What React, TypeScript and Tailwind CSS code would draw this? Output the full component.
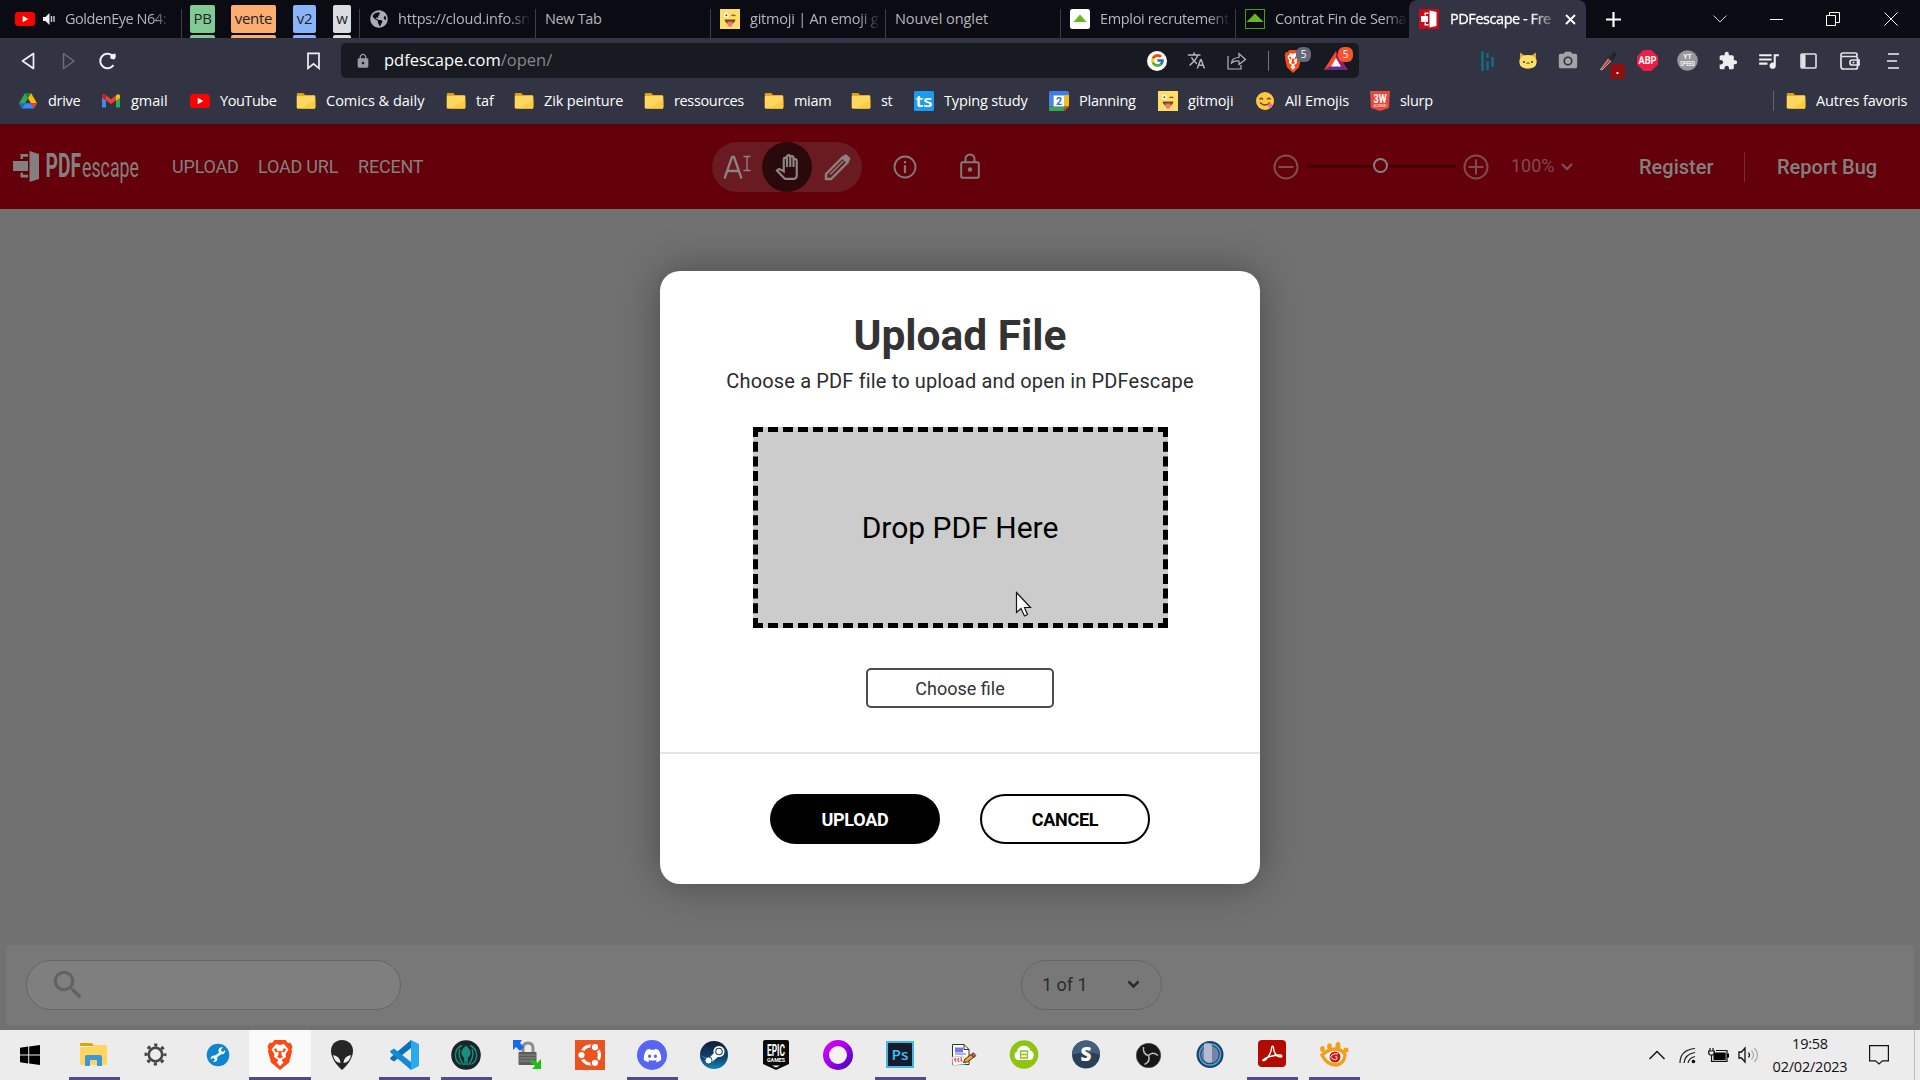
import React from "react";
import { FaDiscord, FaGlobeAmericas } from "react-icons/fa";
import { FcGoogle } from "react-icons/fc";
import {
  MdTranslate,
  MdQueueMusic,
  MdExtension,
  MdOutlinePanTool,
  MdSearch,
  MdPhotoCamera,
  MdLock,
} from "react-icons/md";
import { SiBrave } from "react-icons/si";

const sans = "font-['Open_Sans','Noto_Sans',sans-serif]";

function YouTube() {
  return (
    <svg width="20" height="20" viewBox="0 0 20 20">
      <rect y="3" width="20" height="14" rx="3.2" fill="#f00" />
      <path d="M7.7 6.8v6.4l5.6-3.2z" fill="#fff" />
    </svg>
  );
}

function Wink() {
  return (
    <svg width="20" height="20" viewBox="0 0 20 20">
      <rect width="20" height="20" fill="#ffdd67" />
      <circle cx="6.2" cy="6" r="2.400" fill="#fff" />
      <circle cx="6.400" cy="6.200" r="1" fill="#664e27" />
      <path d="M11.500 7q1.800-2 3.800 0" stroke="#664e27" strokeWidth="1.200" fill="none" />
      <path d="M4.500 10.500h11q-1 4.500-5.500 4.500T4.500 10.500z" fill="#664e27" />
      <path d="M7.500 12.500h5v2.500a2.500 2.800 0 0 1-5 0z" fill="#ff717f" />
    </svg>
  );
}

function Folder() {
  return (
    <svg width="20" height="20" viewBox="0 0 20 20">
      <path d="M.8 3q0-1 1-1h5.500l1.800 2h9q1 0 1 1v11.500q0 1-1 1H1.800q-1 0-1-1z" fill="#d99f17" />
      <path d="M.8 5.800q0-1 1-1h16.500q1 0 1 1v10.700q0 1-1 1H1.800q-1 0-1-1z" fill="#ffd75e" />
      <path d="M19.300 9v7.500q0 1-1 1H5z" fill="#fbcb43" />
    </svg>
  );
}

function Drive() {
  return (
    <svg width="20" height="20" viewBox="0 0 20 20">
      <path d="M7 2h6l-3 5.200z" fill="#188038" />
      <path d="M7 2l3 5.200L4 17.500 1 12.300z" fill="#34a853" />
      <path d="M13 2l6 10.300h-6L10 7.200z" fill="#fbbc04" />
      <path d="M7 12.300h6l3 5.200H4z" fill="#4285f4" />
      <path d="M13 12.300h6l-3 5.200z" fill="#ea4335" />
      <path d="M7 12.300H1l3 5.200z" fill="#1967d2" />
    </svg>
  );
}

function Gmail() {
  return (
    <svg width="20" height="20" viewBox="0 0 20 20">
      <path d="M1 5v11.500h4V8z" fill="#4285f4" />
      <path d="M19 5v11.500h-4V8z" fill="#34a853" />
      <path d="M1 4.500Q2 2.500 4.500 4L10 8.300 15 4.200v5L10 13 5 9.300 1 6.500z" fill="#ea4335" />
      <path d="M15 4.200q3-2 4 .5v2L15 9.600z" fill="#fbbc04" />
      <path d="M1 4.500v2L5 9.600V4.200q-3-1.700-4 .3z" fill="#c5221f" />
    </svg>
  );
}

function Yum() {
  return (
    <svg width="20" height="20" viewBox="0 0 20 20">
      <circle cx="10" cy="10" r="9" fill="#ffc83d" />
      <path d="M4.500 8.500q1.500-2.500 3.500 0M12 8.500q1.500-2.500 3.500 0M5 11.500q5 5 10 0" stroke="#6b4416" strokeWidth="1.300" fill="none" />
      <circle cx="15" cy="14.500" r="2.300" fill="#f56aa0" />
    </svg>
  );
}

function Calendar() {
  return (
    <svg width="20" height="20" viewBox="0 0 20 20">
      <path d="M0 1.500Q0 0 1.500 0h17Q20 0 20 1.500V5H0z" fill="#3f7de8" />
      <path d="M0 4h4.500v11.500H0z" fill="#4285f4" />
      <path d="M15.500 4H20v11.500h-4.500z" fill="#fbbc04" />
      <path d="M0 15.500h15.500V20h-14Q0 20 0 18.500z" fill="#34a853" />
      <path d="M15.500 15.500H20L15.500 20z" fill="#ea4335" />
      <path d="M4.500 4.500h11v11h-11z" fill="#fff" />
      <text x="10" y="14" textAnchor="middle" fontSize="10.500" fontWeight="700" fontFamily="Roboto, sans-serif" fill="#2f6fdc">2</text>
    </svg>
  );
}

function Typing() {
  return (
    <svg width="20" height="20" viewBox="0 0 20 20">
      <rect width="20" height="20" rx="1.500" fill="#1d9bf0" />
      <text x="10" y="15.500" textAnchor="middle" fontSize="16" fontWeight="600" textLength="17" lengthAdjust="spacingAndGlyphs" fontFamily="Noto Sans, sans-serif" fill="#fff">ts</text>
    </svg>
  );
}

function Academy() {
  return (
    <svg width="20" height="20" viewBox="0 0 20 20">
      <path d="M0 0h20l-1 17-9 3-9-3z" fill="#e9483b" />
      <text x="10" y="11.500" textAnchor="middle" fontSize="12" fontWeight="700" textLength="13" lengthAdjust="spacingAndGlyphs" fontFamily="Roboto, sans-serif" fill="#fff">3W</text>
      <text x="10" y="16" textAnchor="middle" fontSize="4" fontWeight="700" textLength="13" lengthAdjust="spacingAndGlyphs" fontFamily="Roboto, sans-serif" fill="#fbd0cc">ACADEMY</text>
    </svg>
  );
}

function GreenHouse({ dark = false }: { dark?: boolean }) {
  return (
    <svg width="20" height="20" viewBox="0 0 20 20">
      {dark ? (
        <rect x=".5" y=".5" width="19" height="19" fill="#0b0b14" stroke="#4c9a1c" />
      ) : (
        <rect width="20" height="20" rx="2.500" fill="#fff" />
      )}
      <path d={dark ? "M1.500 13L10 4.500 18.500 13z" : "M3.500 13L10 5.500 16.500 13z"} fill="#66b721" />
    </svg>
  );
}

function Door() {
  return (
    <svg width="20" height="20" viewBox="0 0 20 20">
      <rect width="20" height="20" fill="#cf0a18" />
      <path d="M10.500 1.500L17.500 3v14l-7 1.500zM2 7h7v6H2zM5.500 3.500h4v1.500H7v1.500H5.500zM5.500 16.500h4V15H7v-1.500H5.500z" fill="#fff" />
    </svg>
  );
}

function Sep() {
  return <div className="mt-[9px] h-[29px] w-px shrink-0 bg-[#3e3e46]" />;
}

const fade = "[mask-image:linear-gradient(to_right,black_82%,transparent_99%)]";

function Tab({ width, icon, label, textClass }: { width: string; icon?: React.ReactNode; label: string; textClass: string }) {
  return (
    <div className={`flex h-[38px] shrink-0 items-center gap-[10px] pl-[9px] ${width}`}>
      {icon}
      <span className={`whitespace-nowrap text-[14.500px] text-[#b5b5b9] ${textClass}`}>{label}</span>
    </div>
  );
}

function Group({ slot, chip, bar, label }: { slot: string; chip: string; bar: string; label: string }) {
  return (
    <div className={`h-[38px] shrink-0 pt-[5px] ${slot}`}>
      <div className={`flex flex-col gap-[2.500px] ${bar}`}>
        <div className={`flex h-[27.500px] items-center justify-center rounded-[2px] pb-[2px] text-[15px] tracking-[-0.300px] text-[#23232b] ${chip}`}>{label}</div>
        <div className={`h-[3px] rounded-t-[2px] ${chip}`} />
      </div>
    </div>
  );
}

function TabStrip() {
  return (
    <div className="flex h-[38px] bg-[#0b0b14]">
      <div className="flex w-[181px] shrink-0 items-center pl-[15px]">
        <YouTube />
        <svg className="ml-[8px]" width="14" height="12" viewBox="0 0 14 12">
          <path d="M0 4h2.500l4-4v12l-4-4H0z" fill="#f0f0f3" />
          <path d="M8.500 3v6M11 3v6" stroke="#c8c8cc" strokeWidth="1.400" />
        </svg>
        <span className={`ml-[8px] w-[107px] whitespace-nowrap text-[14.500px] tracking-[-0.450px] text-[#b5b5b9] ${fade}`}>GoldenEye N64:</span>
      </div>
      <Sep />
      <Group slot="w-[49px] pl-[8px]" bar="w-[25px]" chip="bg-[#81c995]" label="PB" />
      <Group slot="w-[62px]" bar="w-[45px]" chip="bg-[#fcad70]" label="vente" />
      <Group slot="w-[40px]" bar="w-[23px]" chip="bg-[#8ab4f8]" label="v2" />
      <Group slot="w-[26px]" bar="w-[18px]" chip="bg-[#dadce0]" label="w" />
      <Sep />
      <Tab width="w-[175px]" icon={<FaGlobeAmericas className="ml-px size-[18px] shrink-0 text-[#a9adb8]" />} label="https://cloud.info.sn" textClass={`w-[134px] tracking-[-0.200px] ${fade}`} />
      <Sep />
      <Tab width="w-[174px]" label="New Tab" textClass="tracking-[-0.350px]" />
      <Sep />
      <Tab width="w-[174px]" icon={<div className="shrink-0"><Wink /></div>} label="gitmoji | An emoji g" textClass={`w-[132px] tracking-[-0.220px] ${fade}`} />
      <Sep />
      <Tab width="w-[174px]" label="Nouvel onglet" textClass="tracking-[-0.050px]" />
      <Sep />
      <Tab width="w-[174px]" icon={<div className="shrink-0"><GreenHouse /></div>} label="Emploi recrutement" textClass={`w-[132px] tracking-[-0.330px] ${fade}`} />
      <Sep />
      <Tab width="w-[173px]" icon={<div className="shrink-0"><GreenHouse dark /></div>} label="Contrat Fin de Sema" textClass={`w-[134px] tracking-[-0.300px] ${fade}`} />
      <div className="flex w-[177px] shrink-0 items-center rounded-t-[8px] bg-[#323443] pl-[10px]">
        <Door />
        <span className="ml-[11px] w-[107px] whitespace-nowrap text-[14.500px] tracking-[-0.450px] text-white [mask-image:linear-gradient(to_right,black_75%,transparent_102%)] [-webkit-text-stroke:0.300px_white]">PDFescape - Fre</span>
        <svg className="ml-[8px]" width="11" height="11" viewBox="0 0 11 11"><path d="M1 1l9 9M10 1l-9 9" stroke="#fff" strokeWidth="1.900" /></svg>
      </div>
      <svg className="mt-[12px] ml-[20px]" width="15" height="15" viewBox="0 0 15 15"><path d="M7.500 0v15M0 7.500h15" stroke="#fff" strokeWidth="2.200" /></svg>
      <div className="ml-auto flex w-[229px] items-center">
        <div className="w-[58px] pl-[22px]"><svg width="14" height="8" viewBox="0 0 14 8"><path d="M.5.500L7 7 13.500.500" stroke="#d4d4d8" fill="none" /></svg></div>
        <div className="w-[57px] pl-[21px]"><div className="h-px w-[13px] bg-white" /></div>
        <div className="w-[56px] pl-[20px]"><svg width="14" height="14" viewBox="0 0 14 14"><path d="M.5 3.500h9v10h-9zM3.500 3V.500h10v10H10" stroke="#fff" fill="none" /></svg></div>
        <div className="pl-[22px]"><svg width="14" height="14" viewBox="0 0 14 14"><path d="M.5.500l13 13M13.500.500l-13 13" stroke="#fff" fill="none" /></svg></div>
      </div>
    </div>
  );
}

function Ext({ w = "w-[40px]", children }: { w?: string; children: React.ReactNode }) {
  return <div className={`relative flex h-[30px] shrink-0 items-center justify-center ${w}`}>{children}</div>;
}

function Toolbar() {
  return (
    <div className="flex h-[45px] items-center bg-[#323443]">
      <div className="flex w-[341px] shrink-0 items-center">
        <svg className="ml-[21px]" width="14" height="18" viewBox="0 0 14 18"><path d="M12.500 1.500v15L1.500 9z" stroke="#f2f2f4" strokeWidth="1.700" strokeLinejoin="round" fill="none" /></svg>
        <svg className="ml-[27px]" width="14" height="18" viewBox="0 0 14 18"><path d="M1.500 1.500v15L12 9z" stroke="#6b6d79" strokeWidth="1.500" strokeLinejoin="round" fill="none" /></svg>
        <svg className="ml-[22px]" width="19" height="18" viewBox="0 0 19 18"><path d="M15.500 13.200A7.300 7.300 0 1 1 14 3.200" stroke="#f2f2f4" strokeWidth="2" fill="none" /><path d="M12 2.500l5.500-1q1 3.500-1 6l-4-.8z" fill="#f2f2f4" /></svg>
        <svg className="ml-[189px]" width="15" height="18" viewBox="0 0 15 18"><path d="M2 1.300h11v15l-5.500-4.500L2 16.300z" stroke="#f2f2f4" strokeWidth="1.700" fill="none" /></svg>
      </div>
      <div className="flex h-[35px] w-[1018px] shrink-0 items-center rounded-[5px] bg-[#181a21]">
        <MdLock className="ml-[14px] size-[16px] shrink-0 text-[#9a9ba1]" />
        <span className="ml-[13px] w-[765px] text-[16.500px] text-white">pdfescape.com<span className="text-[#85868c]">/open/</span></span>
        <div className="-ml-[2px] flex size-[20px] items-center justify-center rounded-full bg-white"><FcGoogle className="size-[15px]" /></div>
        <MdTranslate className="ml-[20px] size-[19px] text-[#b5b6ba]" />
        <svg className="ml-[21px]" width="20" height="18" viewBox="0 0 20 18"><path d="M1 4v13h13v-4M4.500 11Q5 5.500 12 5.500V1.500l6.500 6L12 12.500V9Q7 8.500 4.500 11z" stroke="#b5b6ba" strokeWidth="1.200" fill="none" /></svg>
        <div className="ml-[21px] h-[20px] w-px bg-[#72737a]" />
        <div className="relative ml-[14px] h-[24px] w-[28px]">
          <svg className="mt-[1px]" width="20" height="23" viewBox="0 0 30 30" preserveAspectRatio="none"><BraveShape /></svg>
          <div className="absolute -top-[2px] left-[13px] flex h-[15px] w-[15px] items-center justify-center rounded-[6px] bg-[#656878] text-[10px] text-white">5</div>
        </div>
        <div className="relative ml-[13px] h-[24px] w-[30px]">
          <svg width="24" height="22" viewBox="0 0 24 22"><path d="M12 2L0 21h24z" fill="#9e1f63" /><path d="M12 2L0 21l12-6z" fill="#ff4724" /><path d="M0 21h24l-12-7z" fill="#662d91" /><path d="M12 9l-5 8.500h10z" fill="#fff" /></svg>
          <div className="absolute -top-[2px] left-[14px] flex h-[15px] w-[15px] items-center justify-center rounded-[6px] bg-[#fb542b] text-[10px] text-white">5</div>
        </div>
      </div>
      <div className="flex w-[561px] pl-[109px]">
        <Ext>
          <svg width="14" height="22" viewBox="0 0 14 22"><path d="M1.500 1v20M6.500 3v5M6.500 11v9M11.500 7v10" stroke="#146a80" strokeWidth="2.600" /></svg>
        </Ext>
        <Ext>
          <svg width="18" height="17" viewBox="0 0 18 17"><path d="M1 .5l4.500 3h7l4.500-3v5.500q1.500 4-.5 7-2 3.500-7.500 3.500T1.500 13q-2-3-.5-7z" fill="#e8a33a" /><path d="M9 3q8 0 8.500 7 0 6.500-8.500 6.500T.5 10Q1 3 9 3z" fill="#ffdf6b" /><circle cx="5" cy="10" r="1" fill="#4a3b12" /><circle cx="13" cy="10" r="1" fill="#4a3b12" /><path d="M7.500 11.500l1.500-.8 1.500.8" stroke="#4a3b12" fill="none" /></svg>
        </Ext>
        <Ext><MdPhotoCamera className="size-[22px] text-[#a3a3a6]" /></Ext>
        <Ext w="w-[40px]">
          <svg width="18" height="20" viewBox="0 0 18 20"><path d="M1.500 18.500L10 7l2.500 2.500L3 19z" fill="#d9392f" stroke="#ccc" strokeWidth=".8" /><path d="M9 6l5 4M11 7l4-5.500 2 1.500-4 6z" stroke="#25262b" strokeWidth="1.800" fill="#25262b" /></svg>
          <div className="absolute left-[22px] top-[18px] flex size-[15px] items-center justify-center rounded-[2px] bg-[#8f0f0f] pb-[2px] text-[12px] font-bold text-white">.</div>
        </Ext>
        <Ext w="w-[38px]">
          <svg width="21" height="21" viewBox="0 0 21 21"><path d="M6.500 0h8L21 6.500v8L14.500 21h-8L0 14.500v-8z" fill="#ed1e45" /><text x="10.500" y="14" textAnchor="middle" fontSize="10" fontWeight="700" textLength="18" lengthAdjust="spacingAndGlyphs" fontFamily="Roboto, sans-serif" fill="#fff">ABP</text></svg>
        </Ext>
        <Ext w="w-[42px]">
          <svg width="21" height="21" viewBox="0 0 21 21"><circle cx="10.500" cy="10.500" r="10.300" fill="#98989b" /><text x="10.500" y="9" textAnchor="middle" fontSize="7" fontWeight="700" fontFamily="Roboto, sans-serif" fill="#f4f4f4">YT</text><text x="10.500" y="16" textAnchor="middle" fontSize="6.500" fontWeight="700" textLength="15" lengthAdjust="spacingAndGlyphs" fontFamily="Roboto, sans-serif" fill="#f4f4f4">SPEED</text></svg>
        </Ext>
        <Ext><MdExtension className="size-[20px] text-[#eeeef0]" /></Ext>
        <Ext><MdQueueMusic className="size-[25px] text-[#eeeef0]" /></Ext>
        <Ext>
          <svg width="17" height="16" viewBox="0 0 17 16"><rect x="1" y="1" width="15" height="14" rx="1" stroke="#e4e4e8" strokeWidth="1.600" fill="none" /><path d="M1.500 1.500h4v13h-4z" fill="#e4e4e8" /></svg>
        </Ext>
        <Ext w="w-[43px]">
          <svg width="20" height="18" viewBox="0 0 20 18"><path d="M17 4V2.500Q17 1 15.500 1H3Q1 1 1 3v11.500Q1 17 3.500 17h12q2 0 2-2V6.500q0-2-2-2H2M19 8h-7q-2 0-2 2v1q0 2 2 2h7z" stroke="#e4e4e8" strokeWidth="1.700" fill="none" /><circle cx="13.500" cy="10.500" r="1" fill="#e4e4e8" /></svg>
        </Ext>
        <Ext w="w-[43px]">
          <svg width="12" height="16" viewBox="0 0 12 16"><path d="M1 1h11M0 8h10M1 15h11" stroke="#f0f0f2" strokeWidth="1.600" /></svg>
        </Ext>
      </div>
    </div>
  );
}

function BraveShape() {
  return (
    <g>
      <path d="M9.500 0h11l2.500 3 2.500-.3 2 4-1 3 .5 2-3 11L15 30 6 22.500l-3-11 .5-2-1-3 2-3.800L7 3z" fill="#fb4a16" />
      <path d="M15 5l4-1 4.500 5.500-3 4.500.5 3-4.500 3 2 2.500L15 26l-3.500-3.500 2-2.500L9 17l.5-3-3-4.500L11 4z" fill="#fff" />
      <path d="M11 8l-2 1.500 2 3 2-.5zM19 8l2 1.500-2 3-2-.5zM13.500 11v4L12 17l3 1.500 3-1.500-1.500-2v-4" fill="#fb4a16" />
    </g>
  );
}

function Bookmark({ w, icon, label, t = "tracking-[-0.300px]" }: { w: string; icon: React.ReactNode; label: string; t?: string }) {
  return (
    <div className={`flex shrink-0 items-center gap-[10px] ${w}`}>
      <div className="shrink-0">{icon}</div>
      <span className={`whitespace-nowrap text-[14.500px] text-white ${t}`}>{label}</span>
    </div>
  );
}

function Bookmarks() {
  return (
    <div className="flex h-[41px] items-center bg-[#323443] pb-[5px] pl-[18px]">
      <Bookmark w="w-[83px]" icon={<Drive />} label="drive" t="tracking-[-0.300px]" />
      <Bookmark w="w-[89px]" icon={<Gmail />} label="gmail" t="tracking-[0px]" />
      <Bookmark w="w-[106px]" icon={<YouTube />} label="YouTube" t="tracking-[-0.450px]" />
      <Bookmark w="w-[150px]" icon={<Folder />} label="Comics & daily" t="tracking-[0px]" />
      <Bookmark w="w-[68px]" icon={<Folder />} label="taf" t="tracking-[-0.100px]" />
      <Bookmark w="w-[130px]" icon={<Folder />} label="Zik peinture" t="tracking-[-0.150px]" />
      <Bookmark w="w-[120px]" icon={<Folder />} label="ressources" t="tracking-[-0.350px]" />
      <Bookmark w="w-[87px]" icon={<Folder />} label="miam" t="tracking-[-0.300px]" />
      <Bookmark w="w-[63px]" icon={<Folder />} label="st" />
      <Bookmark w="w-[135px]" icon={<Typing />} label="Typing study" t="tracking-[-0.150px]" />
      <Bookmark w="w-[109px]" icon={<Calendar />} label="Planning" t="tracking-[-0.250px]" />
      <Bookmark w="w-[97px]" icon={<Wink />} label="gitmoji" t="tracking-[-0.100px]" />
      <Bookmark w="w-[115px]" icon={<Yum />} label="All Emojis" t="tracking-[-0.050px]" />
      <Bookmark w="w-[80px]" icon={<Academy />} label="slurp" />
      <div className="ml-auto h-[20px] w-px bg-[#62646f]" />
      <Bookmark w="w-[146px] pl-[12px]" icon={<Folder />} label="Autres favoris" t="tracking-[-0.150px]" />
    </div>
  );
}

function AppHeader() {
  return (
    <header className="flex h-[85px] items-center border-t border-[#4a0710] bg-[#63000a] font-[Roboto,sans-serif] text-[#848080]">
      <svg className="ml-[13px] shrink-0" width="128" height="36" viewBox="0 0 128 36">
        <path d="M16.500 2L26 5v25l-9.500 3zM0 12h15v10H0zM7.500 5H15v2.800h-5V10H7.500zM7.500 28.500H15v-2.800h-5v-2H7.500z" fill="#848080" />
        <text x="32.500" y="28" fontSize="34" fontWeight="700" fontFamily="Roboto, sans-serif" textLength="35.500" lengthAdjust="spacingAndGlyphs" fill="#848080">PDF</text>
        <text x="69" y="28" fontSize="28" fontFamily="Roboto, sans-serif" textLength="57" lengthAdjust="spacingAndGlyphs" fill="#848080">escape</text>
      </svg>
      <nav className="-mt-[2px] flex w-[571px] shrink-0 text-[18px] tracking-[-0.200px]">
        <span className="box-content w-[86px] pl-[31px]">UPLOAD</span>
        <span className="w-[100px]">LOAD URL</span>
        <span>RECENT</span>
      </nav>
      <div className="flex h-[50px] w-[150px] shrink-0 items-center rounded-full bg-[#6a1a21]">
        <div className="flex w-[50px] justify-center">
          <svg width="28" height="26" viewBox="0 0 28 26"><path d="M1.500 24.500L9 3h2l7.500 21.500M4.500 17h11" stroke="#8d8181" strokeWidth="2.300" fill="none" /><path d="M20.500 2.500h7M24 2.500v14M20.500 16.500h7" stroke="#8d8181" strokeWidth="1.400" /></svg>
        </div>
        <div className="flex size-[50px] items-center justify-center rounded-full bg-[#2a090c]">
          <MdOutlinePanTool className="size-[26px] text-[#8d8585]" />
        </div>
        <div className="flex w-[50px] justify-center">
          <svg width="27" height="27" viewBox="0 0 27 27"><path d="M2 20L18.500 3.500l5 5L7 25H2z" stroke="#8d8181" strokeWidth="2.400" fill="none" /><path d="M18 3l3-2.500q1-.5 2 .3L26 4q.8 1 0 2l-2.500 3z" fill="#8d8181" /><path d="M6 20.500L19.500 7" stroke="#8d8181" strokeWidth="1.400" /></svg>
        </div>
      </div>
      <svg className="ml-[31px] shrink-0" width="24" height="24" viewBox="0 0 24 24"><circle cx="12" cy="12" r="10.500" stroke="#807a7a" strokeWidth="1.900" fill="none" /><path d="M12 10.300V18M12 6v2.300" stroke="#807a7a" strokeWidth="2.200" /></svg>
      <svg className="-mt-[2px] ml-[43px] shrink-0" width="20" height="26" viewBox="0 0 20 26"><rect x="1.200" y="9.200" width="17.600" height="15.500" rx="1.500" stroke="#807a7a" strokeWidth="2" fill="none" /><path d="M5.500 9V6a4.500 4.500 0 0 1 9 0v3" stroke="#807a7a" strokeWidth="2" fill="none" /><circle cx="10" cy="16.500" r="2.200" fill="#807a7a" /></svg>
      <div className="ml-auto flex items-center">
        <svg width="26" height="26" viewBox="0 0 26 26"><circle cx="13" cy="13" r="11.500" stroke="#804c52" strokeWidth="2" fill="none" /><path d="M5.500 13h15" stroke="#804c52" strokeWidth="2" /></svg>
        <div className="relative mx-[7px] h-[14px] w-[150px] pt-[5px]">
          <div className="h-[3px] bg-[#420208]" />
          <div className="absolute -top-[2px] left-[67px] size-[15px] rounded-full border-2 border-[#858080] bg-[#63000a]" />
        </div>
        <svg width="26" height="26" viewBox="0 0 26 26"><circle cx="13" cy="13" r="11.500" stroke="#804c52" strokeWidth="2" fill="none" /><path d="M5.500 13h15M13 5.500v15" stroke="#804c52" strokeWidth="2" /></svg>
        <span className="-mt-[3px] ml-[22px] w-[50px] text-[18px] text-[#804c52]">100%</span>
        <svg width="12" height="8" viewBox="0 0 12 8"><path d="M1 1l5 5 5-5" stroke="#804c52" strokeWidth="2.300" fill="none" /></svg>
        <span className="ml-[66px] w-[105px] text-[20px] font-medium">Register</span>
        <div className="h-[30px] w-px bg-[#762c35]" />
        <span className="ml-[32px] w-[143px] text-[20px] font-medium">Report Bug</span>
      </div>
    </header>
  );
}

function UploadDialog() {
  return (
    <div className="flex h-[613px] w-[600px] flex-col items-center rounded-[20px] bg-white pt-[38px] font-[Roboto,sans-serif] shadow-[0_0_40px_rgba(0,0,0,0.350)]">
      <h1 className="text-[42.500px] leading-[54px] font-bold text-[#333]">Upload File</h1>
      <p className="mt-[5px] text-[20px] leading-[26px] tracking-[0.150px] whitespace-nowrap text-[#2c2c2c]">Choose a PDF file to upload and open in PDFescape</p>
      <div className="relative mt-[33px] flex h-[201px] w-[415px] items-center justify-center border-[5px] border-dashed border-black bg-[#ccc] text-[30px] text-black">
        Drop PDF Here
        <svg className="absolute top-[159px] left-[257px]" width="18" height="26" viewBox="0 0 18 26"><path d="M1.500 1.500v20l4.500-4 3.500 7.500 3-1.500-3-7h6z" fill="#fff" stroke="#15151f" strokeWidth="1.200" /></svg>
      </div>
      <button className="mt-[40px] h-[40px] w-[188px] rounded-[5px] border-2 border-[#4c4c4c] text-[18px] text-[#333]">Choose file</button>
      <div className="mt-[44px] h-[2px] w-full bg-[#e5e5e5]" />
      <div className="mt-[40px] flex gap-[40px] text-[18px] font-bold tracking-[-0.250px]">
        <button className="h-[50px] w-[170px] rounded-full bg-black text-white">UPLOAD</button>
        <button className="h-[50px] w-[170px] rounded-full border-2 border-black text-black">CANCEL</button>
      </div>
    </div>
  );
}

function Task({ children, line = false, active = false }: { children: React.ReactNode; line?: boolean; active?: boolean }) {
  return (
    <div className={`flex h-[50px] w-[62px] shrink-0 flex-col items-center ${active ? "bg-[#fafafa]" : ""}`}>
      <div className="flex h-[47px] items-center pt-[3px]">{children}</div>
      {active ? <div className="h-[3px] w-full bg-[#534a8c]" /> : line ? <div className="h-[3px] w-[51px] bg-[#534a8c]" /> : null}
    </div>
  );
}

function TaskIcon({ children }: { children: React.ReactNode }) {
  return <svg width="30" height="30" viewBox="0 0 30 30">{children}</svg>;
}

function Taskbar() {
  return (
    <footer className="flex h-[50px] bg-[#ececec]">
      <div className="flex w-[63px] shrink-0 items-center pl-[20px]">
        <svg width="20" height="20" viewBox="0 0 20 20"><path d="M0 2.700l8.200-1.100v7.900H0zM9.200 1.400L20 0v9.500H9.200zM0 10.500h8.200v8L0 17.300zM9.200 10.500H20V20L9.200 18.600z" /></svg>
      </div>
      <Task line><TaskIcon><path d="M1 4q0-1 1-1h11l2 3H1z" fill="#dfa10c" /><path d="M1 7h12l2-2h12q1 0 1 1v18q0 1-1 1H1z" fill="#ffd55c" /><path d="M6 26V17q0-2 2-2h13q2 0 2 2v9h-5v-6h-7v6z" fill="#3a96dd" /></TaskIcon></Task>
      <Task><TaskIcon><circle cx="14.500" cy="14.500" r="6.700" stroke="#484848" strokeWidth="2.600" fill="none" /><circle cx="14.500" cy="14.500" r="9.400" stroke="#484848" strokeWidth="3.200" strokeDasharray="3.200 4.183" strokeDashoffset="1.600" fill="none" /></TaskIcon></Task>
      <Task><TaskIcon><circle cx="15" cy="15" r="11.300" fill="#0d86cf" /><path d="M11 18l8-6" stroke="#fff" strokeWidth="2.800" /><path d="M22.300 10l-2.800 2-1.800-2 2.300-2.800q-4.500-.5-4.700 4l2.500 2.800q4.500 1 4.500-4zM7.700 19.500l2.800-1.800 1.500 2-2 2.300q4 .5 4.500-3.500L12 15.500q-4.500-.5-4.300 4z" fill="#fff" /></TaskIcon></Task>
      <Task active><TaskIcon><BraveShape /></TaskIcon></Task>
      <Task><TaskIcon><path d="M15 0c7 0 11 5 11 11 0 7-6 15-11 19C10 26 4 18 4 11 4 5 8 0 15 0z" fill="#262626" /><path d="M6 15q7 1 7.500 8Q7 22 6 15zM24 15q-7 1-7.500 8Q23 22 24 15z" fill="#eee" /></TaskIcon></Task>
      <Task line><TaskIcon><path d="M22 0v8L5 21.500 1 19l1-2z" fill="#0b72b9" /><path d="M22 30v-8L5 8.500 1 11l1 2z" fill="#168ad0" /><path d="M22 0l8 4v22l-8 4z" fill="#29a9f2" /></TaskIcon></Task>
      <Task line><TaskIcon><circle cx="15" cy="15" r="14.800" fill="#1b2527" /><g stroke="#178f82" strokeWidth="1.400" fill="none"><path d="M11 5.500A10.500 10.500 0 0 0 10 24.500M19 5.500A10.500 10.500 0 0 1 20 24.500M9 9q-3 7 3.500 16M21 9q3 7-3.500 16M14 18v7M16 18v7" /></g><path d="M15 5.500c3 3 5 5 4.500 8.500-.5 2-2 3-3 4v3h-3v-3c-1-1-2.500-2-3-4C10 10.500 12 8.500 15 5.500z" fill="#178f82" /></TaskIcon></Task>
      <Task><TaskIcon><path d="M10 14V8q0-5 5-5t5 5v6" stroke="#8d8d8d" strokeWidth="3" fill="none" /><rect x="5.500" y="12" width="18" height="13" rx="1" fill="#5c5c5c" /><path d="M6 15h17M6 18h17M6 21h17" stroke="#8a8a8a" /><path d="M0 0h9L7 3l4 4-4 4-4-4-3 3z" fill="#1767f5" /><path d="M19 19l5 4 4-4v10h-9l3-3-5-4z" fill="#18c20e" /></TaskIcon></Task>
      <Task><TaskIcon><rect width="30" height="30" fill="#e95420" /><circle cx="15.500" cy="15" r="9" stroke="#fff" strokeWidth="3.200" fill="none" /><g fill="#fff" stroke="#e95420" strokeWidth="1.600"><circle cx="6.500" cy="15" r="3.900" /><circle cx="20" cy="7.200" r="3.900" /><circle cx="20" cy="22.800" r="3.900" /></g></TaskIcon></Task>
      <Task line><div className="flex size-[30px] items-center justify-center rounded-full bg-[#5865f2]"><FaDiscord className="size-[19px] text-white" /></div></Task>
      <Task><svg width="28" height="28" viewBox="0 0 28 28"><defs><linearGradient id="steam" x1="0" y1="0" x2="0" y2="1"><stop offset="0" stopColor="#171a37" /><stop offset=".6" stopColor="#0c4672" /><stop offset="1" stopColor="#1387b8" /></linearGradient></defs><circle cx="14" cy="14" r="14" fill="url(#steam)" /><path d="M0 14l8 4 6-6 5 3-7 6z" fill="#fff" /><circle cx="19" cy="10.500" r="4.700" stroke="#fff" strokeWidth="1.800" fill="#164468" /><circle cx="19" cy="10.500" r="2.700" fill="#fff" /><circle cx="8.500" cy="19.500" r="3.600" fill="#fff" stroke="#134b75" /></svg></Task>
      <Task><TaskIcon><path d="M2 2q0-2 2-2h22q2 0 2 2v22l-13 6-13-6z" fill="#0b0b0b" /><text x="15" y="15.500" textAnchor="middle" fontSize="16" fontWeight="700" textLength="18" lengthAdjust="spacingAndGlyphs" fontFamily="Roboto, sans-serif" fill="#fff">EPIC</text><text x="15" y="22" textAnchor="middle" fontSize="5.500" fontWeight="700" textLength="18" lengthAdjust="spacingAndGlyphs" fontFamily="Roboto, sans-serif" fill="#fff">GAMES</text><path d="M11 25.500h8l-4 2z" fill="#fff" /></TaskIcon></Task>
      <Task><svg width="30" height="30" viewBox="0 0 30 30"><defs><linearGradient id="ring" x1="0" y1="0" x2="1" y2="1"><stop offset="0" stopColor="#d900fb" /><stop offset=".55" stopColor="#9800e8" /><stop offset="1" stopColor="#4f00bf" /></linearGradient></defs><circle cx="15" cy="15" r="12" stroke="url(#ring)" strokeWidth="6" fill="#f2f2f2" /></svg></Task>
      <Task line><TaskIcon><rect x="1" y="1" width="28" height="27" fill="#3db8e8" /><rect x="3" y="3" width="24" height="23" fill="#171a2b" /><text x="15" y="19.500" textAnchor="middle" fontSize="15" fontWeight="600" fontFamily="Open Sans, sans-serif" textLength="17" lengthAdjust="spacingAndGlyphs" fill="#38c2f2">Ps</text></TaskIcon></Task>
      <Task><TaskIcon><path d="M5.500 4.500H17l5 5v15H5.500z" fill="#fff" stroke="#333" /><path d="M17 4.500v5h5" stroke="#333" fill="none" /><path d="M8 7.500h8v5H8z" fill="#7479e8" /><path d="M8 14h11" stroke="#5b62c9" /><path d="M5 17l11-1 3 8-13 1.500z" fill="#fff" stroke="#aaa" strokeWidth=".6" /><path d="M8 18l1 4M11 18l1 4M14 17l1 5M7 20h9" stroke="#e03333" strokeWidth="1.200" strokeDasharray="2 1" /><path d="M18 19l6-4.500 2.500 3-6 4.500-4 .5z" fill="#f3a336" stroke="#3a2005" strokeWidth=".9" /><path d="M24.500 14l2-1.300 2.500 3-2 1.600z" fill="#cf5c5c" stroke="#3a2005" strokeWidth=".7" /></TaskIcon></Task>
      <Task><TaskIcon><circle cx="15" cy="14.500" r="14.300" fill="#8fc412" /><path d="M9 20a4.500 4.500 0 0 1-1-8.500 7 7 0 0 1 13.500-1A5 5 0 0 1 21 20z" fill="#fff" /><path d="M11.500 11h7v7h-7zM11.500 14.500h7" stroke="#8fc412" strokeWidth="1.300" fill="none" /></TaskIcon></Task>
      <Task><TaskIcon><circle cx="15" cy="14.500" r="14" fill="#2b4058" /><path d="M1 14.500a14 14 0 0 1 28 0q-14-4-28 0z" fill="#435f7d" /><text x="15" y="21" textAnchor="middle" fontSize="19" fontWeight="800" fontFamily="Open Sans, sans-serif" fill="#fff">S</text></TaskIcon></Task>
      <Task><svg width="25" height="25" viewBox="0 0 25 25"><circle cx="12.500" cy="12.500" r="12.200" fill="#171719" stroke="#4c4c50" strokeWidth=".6" /><g stroke="#bcbcc0" strokeWidth="1.500" fill="none"><path d="M12.500 12.500Q6.500 11 7.500 4" /><path d="M12.500 12.500Q16.500 8 22 12.500" /><path d="M12.500 12.500Q15 18.500 8.500 21.500" /></g></svg></Task>
      <Task><TaskIcon><circle cx="15" cy="14.500" r="13.500" fill="#28406f" /><circle cx="15" cy="14.500" r="10.500" stroke="#38b6d8" strokeWidth="1.300" fill="none" /><circle cx="15" cy="14.500" r="8.700" fill="#7483a8" /><path d="M9 3.500q8-1 8 3v15q-4 3-8-2z" fill="#b4bcd2" /></TaskIcon></Task>
      <Task line><TaskIcon><rect x="1" y="0" width="28" height="27" rx="4" fill="#b30b00" /><path d="M7 20.500c3-1 7-7 7.500-12 0-3 2-3 2-.5 0 4 3 9 7 9 2 0 2-2-.5-2-5 0-11 1.500-15 3.500-2.500 1.500-3 2.500-1 2z" stroke="#fff" strokeWidth="1.400" fill="none" /></TaskIcon></Task>
      <Task line><TaskIcon><path d="M3 15q7-6 13-6 7 0 10 6-1 9-9 10Q8 25 3 15z" stroke="#f59d14" strokeWidth="3.300" fill="#fff" /><circle cx="16" cy="17" r="5.500" fill="#cb1414" /><path d="M16 17q2-2 2 1t-4 1-1-4 6-1" stroke="#fff" fill="none" strokeWidth=".9" /><g fill="#f59d14"><ellipse cx="3.500" cy="9" rx="2.300" ry="3" /><ellipse cx="10.500" cy="6.500" rx="2.300" ry="3.300" /><ellipse cx="19" cy="5.500" rx="2.500" ry="3.500" /><ellipse cx="27" cy="10" rx="2.500" ry="2.500" /></g></TaskIcon></Task>
      <div className="ml-auto flex items-center">
        <svg width="16" height="10" viewBox="0 0 16 10"><path d="M.5 9L8 1.500 15.500 9" stroke="#111" strokeWidth="1.400" fill="none" /></svg>
        <svg className="ml-[14px]" width="18" height="17" viewBox="0 0 18 17"><g stroke="#222" fill="none" strokeWidth="1.200"><path d="M1 16Q1 3 16 1.500" /><path d="M5 16Q6 7 16 5.500" /><path d="M9 16q1-5 7-6.500" /></g><circle cx="14.500" cy="14.500" r="1.800" /></svg>
        <svg className="ml-[11px]" width="21" height="15" viewBox="0 0 21 15"><path d="M2 0v3M5 0v3M.7 3h5.600v2.500L5 7H2L.7 5.500zM3.500 7v6.300H19V2.500H8" stroke="#111" strokeWidth="1.200" fill="none" /><path d="M5.500 4.500H17.700v7.500H5.500zM19 5.500h2v4h-2z" /></svg>
        <svg className="ml-[9px]" width="21" height="18" viewBox="0 0 21 18"><path d="M1 6h2.500L7 2v14l-3.500-4H1z" stroke="#111" strokeWidth="1.300" fill="none" /><path d="M10.500 6.500q2 2.500 0 5" stroke="#111" fill="none" strokeWidth="1.200" /><path d="M13.500 4.500q4 4.500 0 9M16.500 2q6 7 0 14" stroke="#aaa" fill="none" strokeWidth="1.200" /></svg>
        <div className={`ml-[11px] flex w-[80px] flex-col items-center text-[14.500px] leading-[23px] tracking-[-0.220px] text-[#111] ${sans}`}>
          <span>19:58</span>
          <span>02/02/2023</span>
        </div>
        <svg className="ml-[19px]" width="20" height="20" viewBox="0 0 20 20"><path d="M.6.600h18.800v15.200h-6L10 19l-3.400-3.200h-6z" stroke="#111" strokeWidth="1.200" fill="none" /></svg>
        <div className="ml-[25px] h-[50px] w-px bg-[#bdbdbd]" />
        <div className="w-[5px]" />
      </div>
    </footer>
  );
}

export default function App() {
  return (
    <div className="flex h-[1080px] w-[1920px] flex-col overflow-hidden bg-[#717171]">
      <div className={sans}>
        <TabStrip />
        <Toolbar />
        <Bookmarks />
      </div>
      <AppHeader />
      <main className="flex h-[736px] items-start justify-center pt-[62px]">
        <UploadDialog />
      </main>
      <div className="mx-[6px] mb-[5px] flex h-[80px] shrink-0 items-center rounded-[5px] bg-[#787878] pl-[20px] font-[Roboto,sans-serif]">
        <div className="flex h-[50px] w-[375px] items-center rounded-full border border-[#666] bg-[#7f7f7f] pl-[22px]">
          <MdSearch className="size-[38px] text-[#626262]" />
        </div>
        <div className="ml-[620px] flex h-[50px] w-[141px] items-center justify-between rounded-full border border-[#666] pr-[21px] pb-[2px] pl-[20px] text-[18px] text-[#2b2b2b]">
          1 of 1
          <svg width="13" height="9" viewBox="0 0 13 9"><path d="M1.500 1.500l5 5 5-5" stroke="#2b2b2b" strokeWidth="2.500" fill="none" /></svg>
        </div>
      </div>
      <Taskbar />
    </div>
  );
}
